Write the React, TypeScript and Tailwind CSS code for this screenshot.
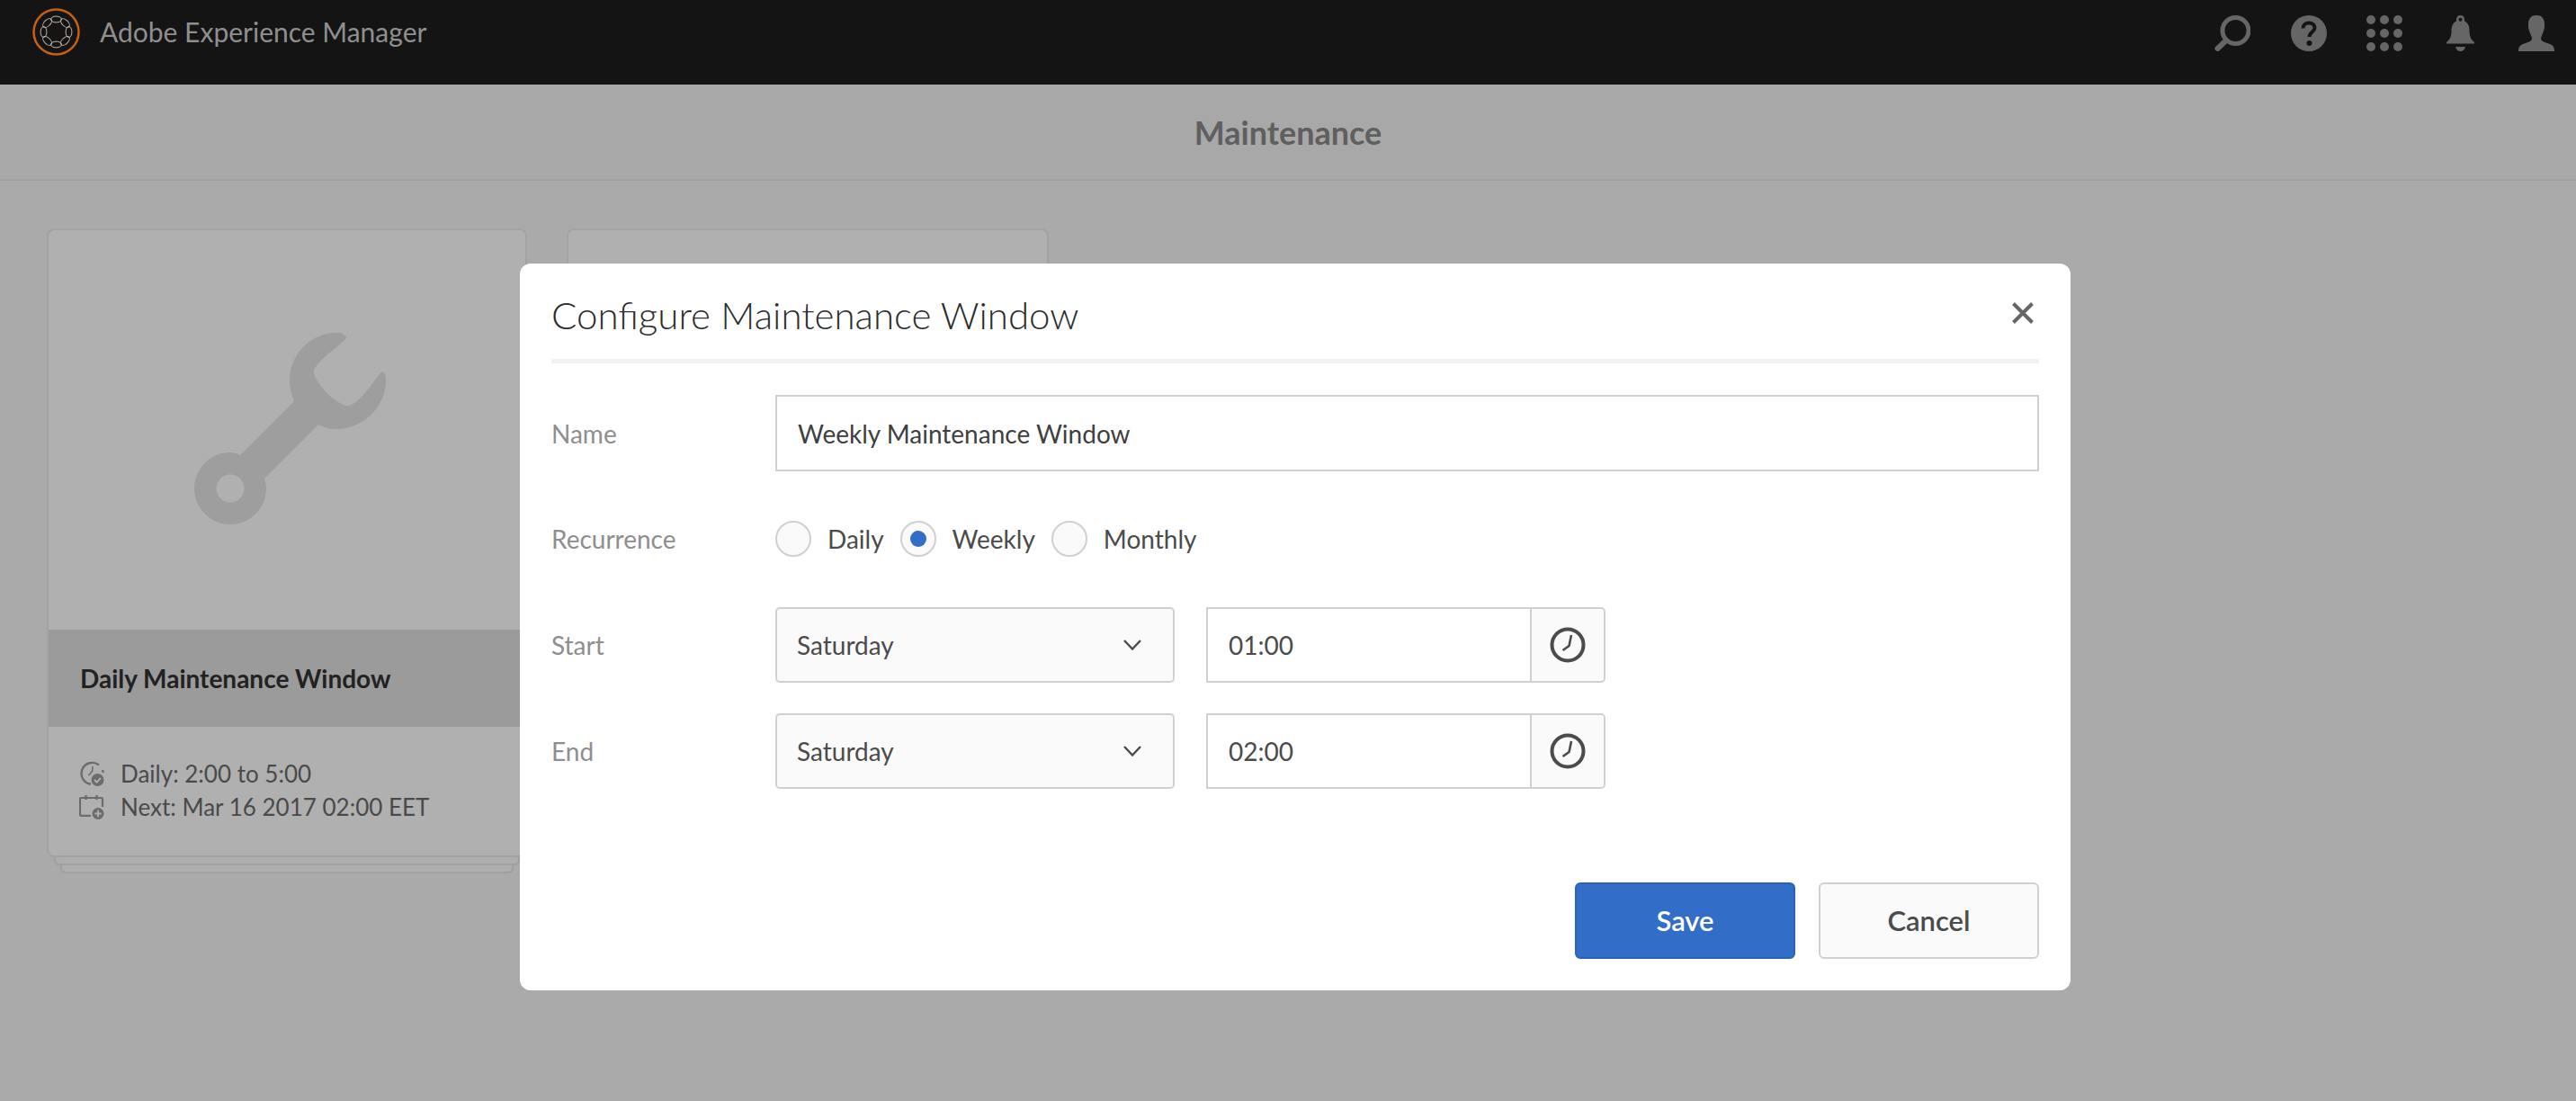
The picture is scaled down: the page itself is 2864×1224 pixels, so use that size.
const FONT = "font-['Lato','Open_Sans',sans-serif]";

function AemLogo() {
  const loops = [0, 45, 90, 135, 180, 225, 270, 315];
  return (
    <svg width="53" height="53" viewBox="0 0 53 53" fill="none" className="shrink-0">
      <circle cx="26.5" cy="26.5" r="25" stroke="#c8600f" strokeWidth="2.5" />
      {loops.map((a) => (
        <ellipse
          key={a}
          cx="26.5"
          cy="12.5"
          rx="3.4"
          ry="6"
          stroke="#c9bbaf"
          strokeWidth="1"
          transform={`rotate(${a} 26.5 26.5) rotate(90 26.5 12.5)`}
        />
      ))}
    </svg>
  );
}

function SearchIcon() {
  return (
    <svg width="40" height="40" viewBox="0 0 40 40" fill="none" stroke="#666" className="shrink-0">
      <circle cx="23.5" cy="17" r="14.5" strokeWidth="5" />
      <path d="M13 28 L3.5 37" strokeWidth="6" strokeLinecap="round" />
    </svg>
  );
}

function HelpIcon() {
  return (
    <svg width="40" height="40" viewBox="0 0 40 40" className="shrink-0">
      <circle cx="20" cy="20" r="20" fill="#666" />
      <path d="M13.5 14.5 C13.5 10.5 16.5 8.5 20 8.5 C24 8.5 26.5 10.8 26.5 14 C26.5 18.5 20.5 18.5 20.5 24" fill="none" stroke="#141414" strokeWidth="4" />
      <circle cx="20.5" cy="31" r="3" fill="#141414" />
    </svg>
  );
}

function AppsIcon() {
  const pos = [5, 20, 35];
  return (
    <svg width="40" height="40" viewBox="0 0 40 40" fill="#666" className="shrink-0">
      {pos.map((y) => pos.map((x) => <circle key={`${x}-${y}`} cx={x} cy={y} r="5" />))}
    </svg>
  );
}

function BellIcon() {
  return (
    <svg width="31" height="40" viewBox="0 0 31 40" fill="#666" className="shrink-0">
      <path
        fillRule="evenodd"
        d="M15.5 0 C18.3 0 20 2 20 4.5 L20 6.5 C24 8.5 25.5 12 25.5 17 C25.5 23 27 27 31 30 L31 31.5 L0 31.5 L0 30 C4 27 5.5 23 5.5 17 C5.5 12 7 8.5 11 6.5 L11 4.5 C11 2 12.7 0 15.5 0 Z M15.5 2.7 A2 2 0 1 0 15.5 6.7 A2 2 0 1 0 15.5 2.7 Z"
      />
      <path d="M10 35 L21 35 C20.5 38 18 40 15.5 40 C13 40 10.5 38 10 35 Z" />
    </svg>
  );
}

function UserIcon() {
  return (
    <svg width="40" height="40" viewBox="0 0 40 40" fill="#666" className="shrink-0">
      <path d="M20 0 C13 0 11 5 11 10 C11 13 11 15 12 17 C13 21 15 23 15 26 C15 29 10 30 5 32 C2 33 0 35 0 40 L40 40 C40 35 38 33 35 32 C30 30 25 29 25 26 C25 23 27 21 28 17 C29 15 29 13 29 10 C29 5 27 0 20 0 Z" />
    </svg>
  );
}

function WrenchIcon() {
  return (
    <svg width="213" height="213" viewBox="0 0 213 213" fill="#9e9e9e">
      <path
        fillRule="evenodd"
        d="M169 5 C166 1 162 0 158 0 C129 0 106 24 106 53 C106 61 108 69 111 76 L51 136 C47 134 44 133 40 133 C18 133 0 151 0 173 C0 195 18 213 40 213 C62 213 80 195 80 173 C80 169 79 165 78 162 L138 102 C145 105 150 107 158 107 C187 107 213 83 213 53 C213 49 212 44 209 43 C206 43 184 81 171 81 C158 81 133 55 133 43 C133 32 170 9 169 5 Z M40 157.5 A15.5 15.5 0 1 0 40 188.5 A15.5 15.5 0 1 0 40 157.5 Z"
      />
    </svg>
  );
}

function ScheduleIcon() {
  return (
    <svg width="28" height="28" viewBox="0 0 28 28" fill="none" className="shrink-0">
      <path d="M22 4.5 A12 12 0 1 0 13 25.8" stroke="#6c6c6c" strokeWidth="2.4" />
      <path d="M26 10 A12 12 0 0 1 26.5 13" stroke="#6c6c6c" strokeWidth="2.4" />
      <path d="M15 6 L14.5 11.5 L10.5 16" stroke="#6c6c6c" strokeWidth="1.6" />
      <circle cx="20.5" cy="21" r="7" fill="#6c6c6c" />
      <path d="M17 21 L19.6 23.6 L24 18.8" stroke="#b0b0b0" strokeWidth="1.8" />
    </svg>
  );
}

function CalendarPlusIcon() {
  return (
    <svg width="28" height="28" viewBox="0 0 28 28" fill="none" className="shrink-0">
      <path d="M13 23.8 L2 23.8 C1.4 23.8 1 23.4 1 22.8 L1 5 C1 4.4 1.4 4 2 4 L25 4 C25.6 4 26 4.4 26 5 L26 14" stroke="#6c6c6c" strokeWidth="2.2" />
      <path d="M7.5 1 L7.5 6 M19.5 1 L19.5 6" stroke="#6c6c6c" strokeWidth="2.4" />
      <circle cx="21" cy="21.5" r="6.5" fill="#6c6c6c" />
      <path d="M21 17.8 L21 25.2 M17.3 21.5 L24.7 21.5" stroke="#b0b0b0" strokeWidth="1.8" />
    </svg>
  );
}

function ClockIcon() {
  return (
    <svg width="40" height="40" viewBox="0 0 40 40" fill="none" stroke="#4b4b4b">
      <circle cx="20" cy="20" r="17.5" strokeWidth="4" />
      <path d="M24 9 L21.5 21 L14.5 26" strokeWidth="2.6" />
    </svg>
  );
}

function Radio({ label, checked }: { label: string; checked?: boolean }) {
  return (
    <div className="flex items-center">
      <span className="flex h-[40px] w-[40px] items-center justify-center rounded-full border-2 border-[#d0d0d0] bg-[#fafafa]">
        {checked && <span className="h-[18px] w-[18px] rounded-full bg-[#326ec8]" />}
      </span>
      <span className="ml-[18px] text-[28px] leading-none text-[#4b4b4b]">{label}</span>
    </div>
  );
}

function ScheduleRow({ label, time, className }: { label: string; time: string; className: string }) {
  return (
    <div className={`flex items-center ${className}`}>
      <div className="w-[249px] text-[28px] text-[#8e8e8e]">{label}</div>
      <div className="flex h-full w-[444px] items-center justify-between rounded-[5px] border-2 border-[#d0d0d0] bg-[#fafafa] pl-[22px] pr-[35px]">
        <span className="text-[28px] text-[#4b4b4b]">Saturday</span>
        <svg width="20" height="12" viewBox="0 0 20 12" fill="none" stroke="#4b4b4b" strokeWidth="2.4">
          <path d="M1 1 L10 10.5 L19 1" />
        </svg>
      </div>
      <div className="ml-[35px] flex h-full w-[444px] rounded-r-[5px] border-2 border-[#d0d0d0]">
        <div className="flex flex-1 items-center pl-[23px] text-[28px] text-[#4b4b4b]">{time}</div>
        <div className="flex w-[82px] items-center justify-center rounded-r-[4px] border-l-2 border-[#d0d0d0] bg-[#fafafa]">
          <ClockIcon />
        </div>
      </div>
    </div>
  );
}

function ConfigureDialog() {
  return (
    <div className="absolute left-[578px] top-[293px] h-[808px] w-[1724px] rounded-[12px] bg-white px-[35px]">
      <div className="flex h-[106px] items-start justify-between border-b-0">
        <h1 className="pt-[28px] text-[42px] font-light leading-[58px] text-[#2c2c2c]">Configure Maintenance Window</h1>
        <svg width="24" height="24" viewBox="0 0 24 24" fill="none" stroke="#666" strokeWidth="4" className="mr-[6px] mt-[43px]">
          <path d="M1.5 1.5 L22.5 22.5 M22.5 1.5 L1.5 22.5" />
        </svg>
      </div>
      <div className="h-[5px] bg-[#f2f2f2]" />

      <div className="mt-[35px] flex h-[85px] items-center">
        <div className="w-[249px] text-[28px] text-[#8e8e8e]">Name</div>
        <div className="flex h-full flex-1 items-center border-2 border-[#d0d0d0] pl-[23px] text-[28px] text-[#3f3f3f]">
          Weekly Maintenance Window
        </div>
      </div>

      <div className="mt-[55px] flex h-[40px] items-center">
        <div className="w-[249px] text-[28px] text-[#8e8e8e]">Recurrence</div>
        <div className="flex items-center gap-[18px]">
          <Radio label="Daily" />
          <Radio label="Weekly" checked />
          <Radio label="Monthly" />
        </div>
      </div>

      <ScheduleRow label="Start" time="01:00" className="mt-[56px] h-[84px]" />
      <ScheduleRow label="End" time="02:00" className="mt-[34px] h-[84px]" />

      <div className="mt-[104px] flex justify-end gap-[26px]">
        <button className="h-[85px] w-[245px] rounded-[6px] border-2 border-[#2a62b8] bg-[#326ec8] text-[31px] font-semibold text-white">
          Save
        </button>
        <button className="h-[85px] w-[245px] rounded-[6px] border-2 border-[#d0d0d0] bg-[#fafafa] text-[31px] font-semibold text-[#4b4b4b]">
          Cancel
        </button>
      </div>
    </div>
  );
}

export default function App() {
  return (
    <div className={`relative h-[1224px] w-full overflow-hidden bg-[#aaaaaa] ${FONT}`}>
      <header className="flex h-[94px] items-start justify-between bg-[#141414] pl-[36px] pr-[24px]">
        <div className="flex items-center pt-[9px]">
          <AemLogo />
          <span className="ml-[22px] text-[30px] leading-[53px] text-[#8f8f8f]">Adobe Experience Manager</span>
        </div>
        <div className="flex items-center pt-[17px]">
          <SearchIcon />
          <div className="ml-[45px]"><HelpIcon /></div>
          <div className="ml-[44px]"><AppsIcon /></div>
          <div className="ml-[49px]"><BellIcon /></div>
          <div className="ml-[49px]"><UserIcon /></div>
        </div>
      </header>

      <div className="flex h-[107px] items-center justify-center border-b-2 border-[#a0a0a0] bg-[#a8a8a8]">
        <span className="text-[36px] font-bold text-[#5f5f5f]">Maintenance</span>
      </div>

      <div className="flex gap-[44px] pl-[52px] pt-[53px]">
        <div className="w-[534px]">
          <div className="h-[699px] overflow-hidden rounded-[8px] border-2 border-[#a2a2a2] bg-[#b0b0b0]">
            <div className="flex h-[444px] items-start justify-center pl-[6px] pt-[114px]">
              <WrenchIcon />
            </div>
            <div className="flex h-[108px] items-center bg-[#9b9b9b] pl-[35px] text-[28px] font-bold text-[#222222]">
              Daily Maintenance Window
            </div>
            <div className="flex flex-col gap-[9px] pl-[34px] pt-[38px] text-[26px] leading-[27px] text-[#4a4a4a]">
              <div className="flex items-center gap-[18px]">
                <ScheduleIcon />
                <span>Daily: 2:00 to 5:00</span>
              </div>
              <div className="flex items-center gap-[18px]">
                <CalendarPlusIcon />
                <span>Next: Mar 16 2017 02:00 EET</span>
              </div>
            </div>
          </div>
          <div className="mx-[8px] h-[9px] rounded-b-[6px] border-x-2 border-b-2 border-[#a0a0a0] bg-[#aeaeae]" />
          <div className="mx-[15px] h-[9px] rounded-b-[6px] border-x-2 border-b-2 border-[#a0a0a0] bg-[#aeaeae]" />
        </div>
        <div className="h-[699px] w-[536px] rounded-[8px] border-2 border-[#a2a2a2] bg-[#b0b0b0]" />
      </div>

      <ConfigureDialog />
    </div>
  );
}
